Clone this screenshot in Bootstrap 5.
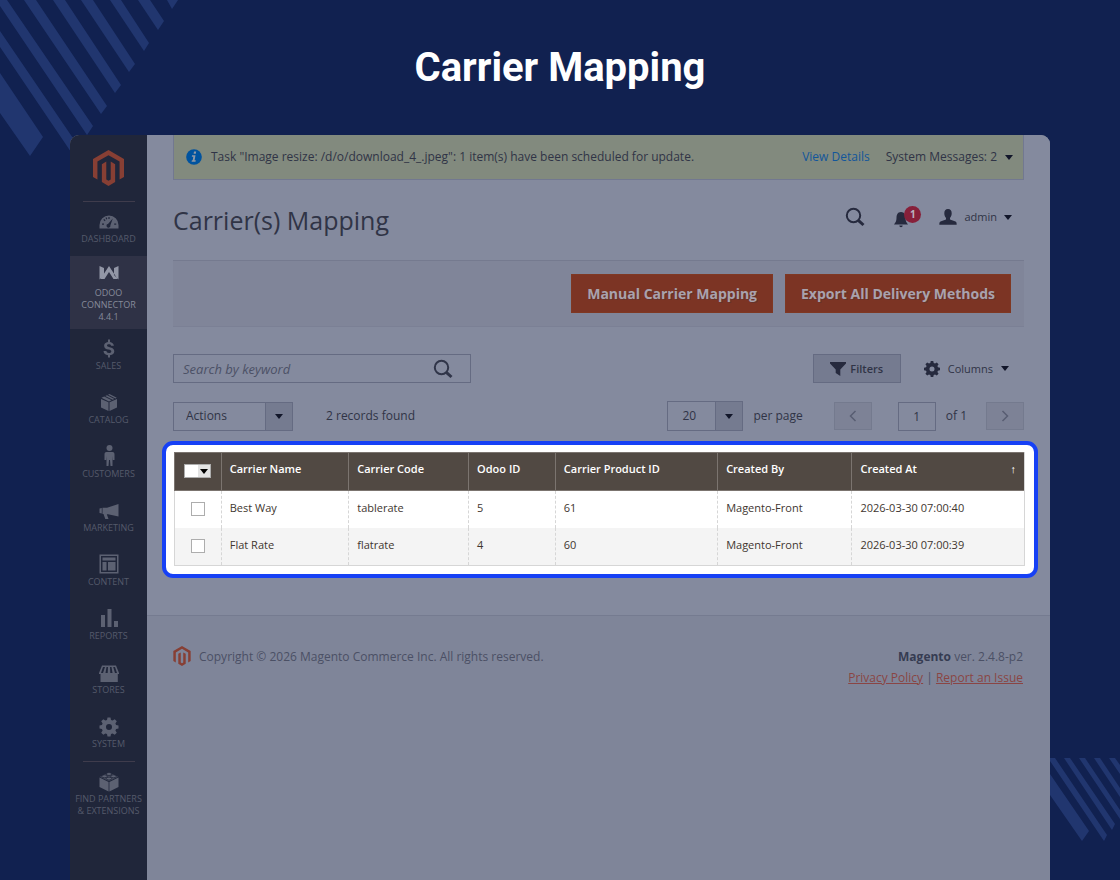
<!DOCTYPE html>
<html lang="en">
<head>
<meta charset="utf-8">
<meta name="viewport" content="width=device-width, initial-scale=1">
<title>Carrier Mapping</title>
<link href="https://cdn.jsdelivr.net/npm/bootstrap@5.3.0/dist/css/bootstrap.min.css" rel="stylesheet">
<style>
  body { background: #112150; font-family: "Open Sans", sans-serif; font-size: 12px; line-height: 20px; color: #303446; overflow-x: hidden; }
  .page { min-height: 100vh; overflow: hidden; }
  .stripes { position: absolute; fill: #21366f; }
  .stripes-top { top: 0; left: 0; }
  .stripes-side { top: 758px; right: 0; }
  .hero { height: 135px; }
  .hero h1 { font-family: Roboto, sans-serif; font-weight: 700; font-size: 40px; line-height: 48px; }
  .shell { margin: 0 70px; border-radius: 9px 9px 0 0; overflow: hidden; background: #7f8599; }
  .side { width: 77px; flex: none; background: #20263a; color: #555a6b; }
  .side .logo { color: #873f34; height: 66px; }
  .side hr { width: 52px; height: 1px; border: 0; background: #3f3c4c; opacity: 1; margin: 0 auto; }
  .side-item { display: block; min-height: 54px; padding: 8px 0 4px; color: inherit; text-decoration: none; text-align: center; font-size: 9px; line-height: 12px; text-transform: uppercase; }
  .side-item svg { display: block; width: 20px; height: 22px; margin: 0 auto 1px; fill: #5c6172; }
  .side-item.current { background: #2f3246; color: #868a9a; min-height: 73px; }
  .side-item.current svg { fill: #9296a6; }
  .content { background: #848a9e; padding: 0 26px; height: 480px; }
  .notice { height: 45px; background: #828a7e; border: 1px solid #727890; border-top: 0; padding: 0 10px 0 12px; }
  .notice a { color: #12569b; }
  .notice-icon { margin-right: 9px; }
  .plain-btn { background: none; border: 0; padding: 0; color: inherit; }
  .caret { width: 0; height: 0; border: 4px solid transparent; border-top: 5px solid #12162a; border-bottom: 0; flex: none; }
  .titlebar { height: 80px; }
  .titlebar h2 { font-size: 25px; line-height: 32px; font-weight: 400; margin: 0; }
  .tools { padding: 0 12px 6px 0; }
  .user-btn { gap: 7px; font-size: 11px; }
  .alerts { width: 30px; height: 22px; }
  .alerts span { position: absolute; top: 0; right: 2px; width: 17px; height: 17px; border-radius: 50%; background: #87203a; color: #b8b4c0; font-size: 10px; line-height: 17px; font-weight: 700; }
  .actionbar { height: 67px; background: #808599; border-top: 1px solid #757a8f; border-bottom: 1px solid #7b8095; padding: 0 13px; }
  .main-btn { background: #7c3424; border: 1px solid #7f3823; border-radius: 0; color: #a9a2ad; font-size: 14px; font-weight: 700; line-height: 21px; padding: 8px 15px; text-shadow: 1px 1px 0 #64332c; }
  .main-btn:hover { background: #6e2d20; color: #bbb5bf; }
  .filter-row { margin-top: 27px; }
  .page-row { margin-top: 18px; }
  .box { border: 1px solid #656b82; height: 29px; }
  .box input, .box select { border: 0; background: transparent; appearance: none; color: inherit; outline: 0; min-width: 0; }
  .search { width: 298px; padding: 0 17px 0 9px; }
  .search input::placeholder { font-style: italic; color: #4c5166; opacity: 1; }
  .search input { font-size: 13px; padding: 0; }
  .drop { width: 27px; border-left: 1px solid #656b82; background: #757b90; pointer-events: none; }
  .actions-box { width: 120px; }
  .actions-box select { padding-left: 12px; }
  .found { margin-left: 33px; }
  .count-box { width: 76px; height: 30px; }
  .count-box select { padding-left: 14px; }
  .after-box { margin-left: 10px; }
  .filter-btn { width: 88px; height: 29px; background: #757b90; border: 1px solid #656b82; font-size: 11px; font-weight: 600; color: inherit; padding: 0; }
  .cols-btn { margin: 0 15px 0 23px; font-size: 11px; }
  .pager { width: 38px; height: 28px; background: #7d8296; border: 1px solid #747a8e; padding: 0; }
  .pager svg { fill: none; stroke: #585d72; }
  .pager-prev { margin: 0 26px 0 31px; }
  .pager-next { margin-left: 19px; }
  .page-no { width: 38px; height: 29px; border: 1px solid #656b82; background: transparent; color: inherit; text-align: center; padding: 0; }
  .spot { margin: 10px -14px 0 -11px; border: 4px solid #1640f5; border-radius: 11px; background: #fff; padding: 7px 9px 8px 8px; color: #41362f; font-size: 11px; }
  .grid { width: 100%; table-layout: fixed; border-collapse: separate; border-spacing: 0; border: 1px solid #d6d6d6; border-width: 0 1px 1px 0; line-height: 18px; }
  .grid th { background: #514943; color: #fff; font-weight: 600; height: 39px; padding: 7px 8px 12px; border: 1px solid #7b746f; border-width: 1px 0 1px 1px; }
  .grid td { height: 37px; padding: 7px 8px 11px; border-left: 1px dashed #d6d6d6; }
  .grid td:first-child, .grid th:first-child { border-left-style: solid; padding: 0 0 3px; text-align: center; vertical-align: middle; }
  .grid tr:nth-child(even) td { background: #f4f4f4; }
  .grid td input { appearance: none; width: 14px; height: 14px; border: 1px solid #adadad; background: #fff; vertical-align: middle; margin: 0; }
  .grid td input:checked, .pick input:checked { background: #514943; }
  .pick { width: 27px; height: 14px; background: #e3e3e3; border: 1px solid #adadad; vertical-align: middle; }
  .pick input { appearance: none; width: 13px; height: 12px; background: #fff; margin: 0; }
  .pick .caret { border-top-color: #000; }
  .foot { border-top: 1px solid #757b90; padding: 30px 27px 0 26px; line-height: 21px; color: #4b5065; }
  .foot a { color: #8a4544; }
  .foot strong { color: #363c52; }
</style>
</head>
<body>
<div class="page position-relative d-flex flex-column">
  <svg class="stripes stripes-top" width="180" height="160" aria-hidden="true"><path d="M0 73L43 137L30 156L0 113ZM0 31L79 147L73 155L0 47ZM-4 0H7L93 126L87 135ZM24 0H36L107 106L101 114ZM53 0H65L121 85L115 93ZM81 0H93L135 64L129 72ZM110 0H121L149 43L144 51ZM138 0H150L164 21L158 30ZM167 0H178L172 9Z"/></svg>
  <svg class="stripes stripes-side" width="70" height="84" aria-hidden="true"><path d="M0 16L39 73L32 83L0 37ZM0 0H5L57 77L54 83L0 3ZM14 0H20L65 66L62 72ZM29 0H35L70 52V61ZM44 0H50L70 30V39ZM59 0H65L70 7V16Z"/></svg>

  <header class="hero d-flex align-items-center justify-content-center">
    <h1 class="text-white m-0">Carrier Mapping</h1>
  </header>

  <div class="shell position-relative d-flex flex-grow-1">
    <nav class="side" aria-label="Admin menu">
      <a href="#" class="logo d-flex align-items-center justify-content-center" aria-label="Magento">
        <svg width="31" height="36" viewBox="1.6 0 20.8 24" fill="currentColor"><path d="M12 24l-4.455-2.572v-12l2.97-1.715v12.001l1.485.902 1.485-.902V7.713l2.971 1.715v12L12 24zM22.391 6v12l-2.969 1.714V7.713L12 3.43 4.574 7.713v12.001L1.609 18V6L12 0l10.391 6z"/></svg>
      </a>
      <hr>
      <a href="#" class="side-item"><svg viewBox="0 0 20 22"><path fill-rule="evenodd" d="M.5 18.500V15a9.500 9.500 0 0 1 19 0v3.500ZM13.800 8.500L9.200 13.700a2 2 0 1 0 2.200 1.500ZM3 13.500h2v1.300H3ZM4.300 9.800l.9-.9 1.400 1.400-.9.9ZM9.400 7h1.200v2H9.400ZM15.200 13.500h2v1.300h-2ZM6.500 7.800l1-.5.8 1.700-1 .5Z"/></svg>Dashboard</a>
      <a href="#" class="side-item current" aria-current="page"><svg viewBox="0 0 20 22"><path d="M.5 2L5 4V11L.5 15.500ZM19.500 2L15 4V11L19.500 15.500ZM10 2L18.500 15H14.500L10 8L5.500 15H1.500Z"/></svg>Odoo<br>Connector<br>4.4.1</a>
      <a href="#" class="side-item"><svg viewBox="0 0 20 22"><path d="M9 2.500h2V5c2 .3 3.600 1.500 3.900 3.700h-2.800C11.800 7.800 11.100 7.300 10 7.300c-1.300 0-2 .5-2 1.300 0 .9.800 1.200 2.600 1.600 2.600.6 4.700 1.500 4.700 4.100 0 2.200-1.600 3.600-4.300 3.900v2.300H9v-2.300c-2.600-.3-4.300-1.700-4.500-4.200h2.900c.2 1.200 1 1.900 2.600 1.900s2.300-.6 2.300-1.500c0-1-.8-1.300-2.800-1.800-2.500-.6-4.400-1.400-4.400-3.900C5.100 6.700 6.600 5.300 9 5Z"/></svg>Sales</a>
      <a href="#" class="side-item"><svg viewBox="0 0 20 22"><path d="M2 8L9.500 11.300V20L2 16.500ZM18 8L10.500 11.300V20L18 16.500ZM2.500 6.800L5.200 5.600L12.600 9.200L10 10.400ZM6.200 5.100L8 4.200L15.500 7.900L13.600 8.800ZM9 3.700L10.500 3L17.700 6.700L16.500 7.400Z"/></svg>Catalog</a>
      <a href="#" class="side-item"><svg viewBox="0 0 20 22"><circle cx="10.500" cy="3" r="3"/><path d="M7.500 7h6C15 7 15.500 8 15.500 9.500V15h-1.700L13.500 11V21h-2l-.5-6h-1l-.5 6h-2V11L7.200 15H5.500V9.500C5.500 8 6 7 7.500 7Z"/></svg>Customers</a>
      <a href="#" class="side-item"><svg viewBox="0 0 20 22"><path d="M19.500 5V17.500L9 15.200H7.800L9.500 20H6.300L4.500 15H3.500V8.800H8ZM.5 9.500L2.800 9V14.500L.5 14Z"/></svg>Marketing</a>
      <a href="#" class="side-item"><svg viewBox="0 0 20 22"><path fill-rule="evenodd" d="M.5 1.500h19v19H.5ZM2 3v16h16V3ZM3.500 4.500h13v3h-13ZM3.500 9h4v8.500h-4ZM9 9h7.500v8.500H9Z"/></svg>Content</a>
      <a href="#" class="side-item"><svg viewBox="0 0 20 22"><path d="M2 8h4v12H2ZM8.500 2h4v18h-4ZM15 14h4v6h-4Z"/></svg>Reports</a>
      <a href="#" class="side-item"><svg viewBox="0 0 20 22"><path fill-rule="evenodd" d="M3 4.500h14L20 12v1h-1.200v8H1.500V13H0v-1ZM4 6L2 12h2L6 6ZM7.500 6L6.500 12h2.200L9 6ZM11 6l.3 6h2.200l-1-6ZM14.200 6L16 12h2L16 6Z"/></svg>Stores</a>
      <a href="#" class="side-item"><svg viewBox="0 0 20 22"><path fill-rule="evenodd" d="M8.500 2.500h3l.5 2.400 1.600.7L15.700 4.200l2.100 2.100-1.400 2.100.7 1.600 2.400.5v3l-2.400.5-.7 1.600 1.400 2.100-2.100 2.100-2.100-1.400-1.600.7-.5 2.400h-3L8 19.100l-1.600-.7-2.100 1.400-2.100-2.100 1.400-2.100L2.900 14 .5 13.500v-3L2.900 10l.7-1.600L2.200 6.300l2.100-2.100 2.100 1.400L8 4.900ZM10 9a3 3 0 1 0 0 6a3 3 0 0 0 0-6Z"/></svg>System</a>
      <hr>
      <a href="#" class="side-item"><svg viewBox="0 0 20 22"><path d="M.5 7.500L9.600 12V21.500L.5 17ZM19.500 7.500L10.400 12V21.500L19.500 17Z"/><path d="M10 2.500L19 6.800L10 11.200L1 6.800Z" opacity=".7"/><g stroke="#20263a" stroke-width=".8"><ellipse cx="10" cy="4" rx="2.700" ry="1.500"/><ellipse cx="5.500" cy="6.300" rx="2.700" ry="1.500"/><ellipse cx="14.500" cy="6.300" rx="2.700" ry="1.500"/><ellipse cx="10" cy="8.600" rx="2.700" ry="1.500"/></g></svg>Find Partners<br>&amp; Extensions</a>
    </nav>

    <div class="flex-grow-1">
      <main class="content">
        <div class="notice d-flex align-items-center">
          <svg class="notice-icon flex-shrink-0" width="16" height="16" viewBox="0 0 16 16"><circle cx="8" cy="8" r="7.800" fill="#00539f"/><path fill="#8f98a5" d="M8 2.500h2.200L9.800 4.800H7.600ZM6 6.200h3.500L8.600 11.300h1.200l-.3 1.500H5.600l.3-1.500h.8l.6-3.600H5.800Z"/></svg>
          <span>Task "Image resize: /d/o/download_4_.jpeg": 1 item(s) have been scheduled for update.</span>
          <a href="#" class="ms-auto me-3 text-decoration-none">View Details</a>
          <button type="button" class="plain-btn d-flex align-items-center gap-2">System Messages: 2 <span class="caret"></span></button>
        </div>

        <div class="titlebar d-flex align-items-center justify-content-between">
          <h2>Carrier(s) Mapping</h2>
          <div class="tools d-flex align-items-center">
            <button type="button" class="plain-btn d-flex me-4" aria-label="Search"><svg width="20" height="20" viewBox="0 0 20 20" fill="none" stroke="#262a3e"><circle cx="8.500" cy="8.500" r="6.700" stroke-width="2"/><path d="M13.300 13.300L18.500 18" stroke-width="3"/></svg></button>
            <button type="button" class="plain-btn alerts position-relative ms-1 me-3" aria-label="Notifications"><svg class="position-absolute start-0 bottom-0" width="16" height="18" viewBox="0 0 16 18" fill="#262a3e"><path d="M8 2C11.500 2 12.500 5 12.500 8S13.500 12.500 15 14.500H1C2.500 12.500 3.500 11 3.500 8S4.500 2 8 2ZM6.300 15.500h3.400a1.700 1.700 0 0 1-3.400 0Z"/></svg><span>1</span></button>
            <button type="button" class="plain-btn user-btn d-flex align-items-center"><svg width="18" height="16" viewBox="0 0 18 16" fill="#262a3e"><path d="M9 0c2.600 0 3.700 1.700 3.700 4.200 0 2-.8 3.800-1.700 4.700v1.600l5.500 2c.9.400 1.200 1.200 1.200 3.200H.3c0-2 .3-2.800 1.200-3.200L7 10.500V8.900C6.100 8 5.300 6.200 5.300 4.200 5.300 1.700 6.400 0 9 0Z"/></svg>admin <span class="caret"></span></button>
          </div>
        </div>

        <div class="actionbar d-flex align-items-center justify-content-end gap-2">
          <button type="button" class="btn main-btn me-1">Manual Carrier Mapping</button>
          <button type="button" class="btn main-btn">Export All Delivery Methods</button>
        </div>

        <div class="filter-row d-flex align-items-center">
          <div class="box search d-flex align-items-center">
            <input type="text" class="flex-grow-1" placeholder="Search by keyword" aria-label="Search by keyword">
            <button type="button" class="plain-btn d-flex" aria-label="Search"><svg width="20" height="20" viewBox="0 0 20 20" fill="none" stroke="#303549"><circle cx="8.500" cy="8.500" r="6.700" stroke-width="2"/><path d="M13.300 13.300L18.500 18" stroke-width="3"/></svg></button>
          </div>
          <button type="button" class="filter-btn d-flex align-items-center justify-content-center gap-1 ms-auto"><svg width="16" height="14" viewBox="0 0 16 14" fill="#262a3e"><path d="M0 0H16V1.500L10.300 7.500V14L5.700 11V7.500L0 1.500Z"/></svg>Filters</button>
          <button type="button" class="plain-btn cols-btn d-flex align-items-center gap-2"><svg width="16" height="16" viewBox=".5 2.500 19 19" fill="#262a3e"><path fill-rule="evenodd" d="M8.500 2.500h3l.5 2.400 1.600.7L15.700 4.200l2.100 2.100-1.400 2.100.7 1.600 2.400.5v3l-2.400.5-.7 1.600 1.400 2.100-2.100 2.100-2.100-1.400-1.600.7-.5 2.400h-3L8 19.100l-1.600-.7-2.100 1.400-2.100-2.100 1.400-2.100L2.900 14 .5 13.500v-3L2.900 10l.7-1.600L2.200 6.300l2.100-2.100 2.100 1.400L8 4.900ZM10 9a3 3 0 1 0 0 6a3 3 0 0 0 0-6Z"/></svg>Columns <span class="caret"></span></button>
        </div>

        <div class="page-row d-flex align-items-center">
          <div class="box actions-box d-flex">
            <select class="flex-grow-1" aria-label="Actions"><option>Actions</option><option>Delete</option></select>
            <span class="drop d-flex align-items-center justify-content-center"><span class="caret"></span></span>
          </div>
          <span class="found">2 records found</span>
          <div class="box count-box d-flex ms-auto">
            <select id="per-page" class="flex-grow-1"><option>20</option><option>30</option><option>50</option></select>
            <span class="drop d-flex align-items-center justify-content-center"><span class="caret"></span></span>
          </div>
          <label for="per-page" class="after-box">per page</label>
          <button type="button" class="pager pager-prev d-flex align-items-center justify-content-center" aria-label="Previous page"><svg width="8" height="12" viewBox="0 0 8 12" stroke-width="1.500"><path d="M6.500 1L1.500 6L6.500 11"/></svg></button>
          <input id="page-no" class="page-no" type="text" value="1">
          <label for="page-no" class="after-box">of 1</label>
          <button type="button" class="pager pager-next d-flex align-items-center justify-content-center" aria-label="Next page"><svg width="8" height="12" viewBox="0 0 8 12" stroke-width="1.500"><path d="M1.500 1L6.500 6L1.500 11"/></svg></button>
        </div>

        <section class="spot" aria-label="Carrier mappings">
          <table class="grid">
            <colgroup><col style="width:5.500%"><col style="width:15%"><col style="width:14.100%"><col style="width:10.200%"><col style="width:19.100%"><col style="width:15.800%"><col style="width:20.300%"></colgroup>
            <thead>
              <tr>
                <th><span class="pick d-inline-flex align-items-center"><input type="checkbox" aria-label="Select all"><span class="caret mx-auto"></span></span></th>
                <th>Carrier Name</th><th>Carrier Code</th><th>Odoo ID</th><th>Carrier Product ID</th><th>Created By</th>
                <th><span class="d-flex justify-content-between">Created At <span class="fw-normal">↑</span></span></th>
              </tr>
            </thead>
            <tbody>
              <tr><td><input type="checkbox" aria-label="Select Best Way"></td><td>Best Way</td><td>tablerate</td><td>5</td><td>61</td><td>Magento-Front</td><td>2026-03-30 07:00:40</td></tr>
              <tr><td><input type="checkbox" aria-label="Select Flat Rate"></td><td>Flat Rate</td><td>flatrate</td><td>4</td><td>60</td><td>Magento-Front</td><td>2026-03-30 07:00:39</td></tr>
            </tbody>
          </table>
        </section>
      </main>

      <footer class="foot d-flex justify-content-between">
        <div class="d-flex gap-2 align-self-start"><svg width="18" height="20" viewBox="1.6 0 20.8 24" fill="#873f34"><path d="M12 24l-4.455-2.572v-12l2.970-1.715v12.001l1.485.902 1.485-.902V7.713l2.971 1.715v12L12 24zM22.391 6v12l-2.969 1.714V7.713L12 3.430 4.574 7.713v12.001L1.609 18V6L12 0l10.391 6z"/></svg>Copyright © 2026 Magento Commerce Inc. All rights reserved.</div>
        <div class="text-end"><strong>Magento</strong> ver. 2.4.8-p2<br><a href="#">Privacy Policy</a> | <a href="#">Report an Issue</a></div>
      </footer>
    </div>
  </div>
</div>
<script src="https://cdn.jsdelivr.net/npm/bootstrap@5.3.0/dist/js/bootstrap.bundle.min.js"></script>
</body>
</html>
